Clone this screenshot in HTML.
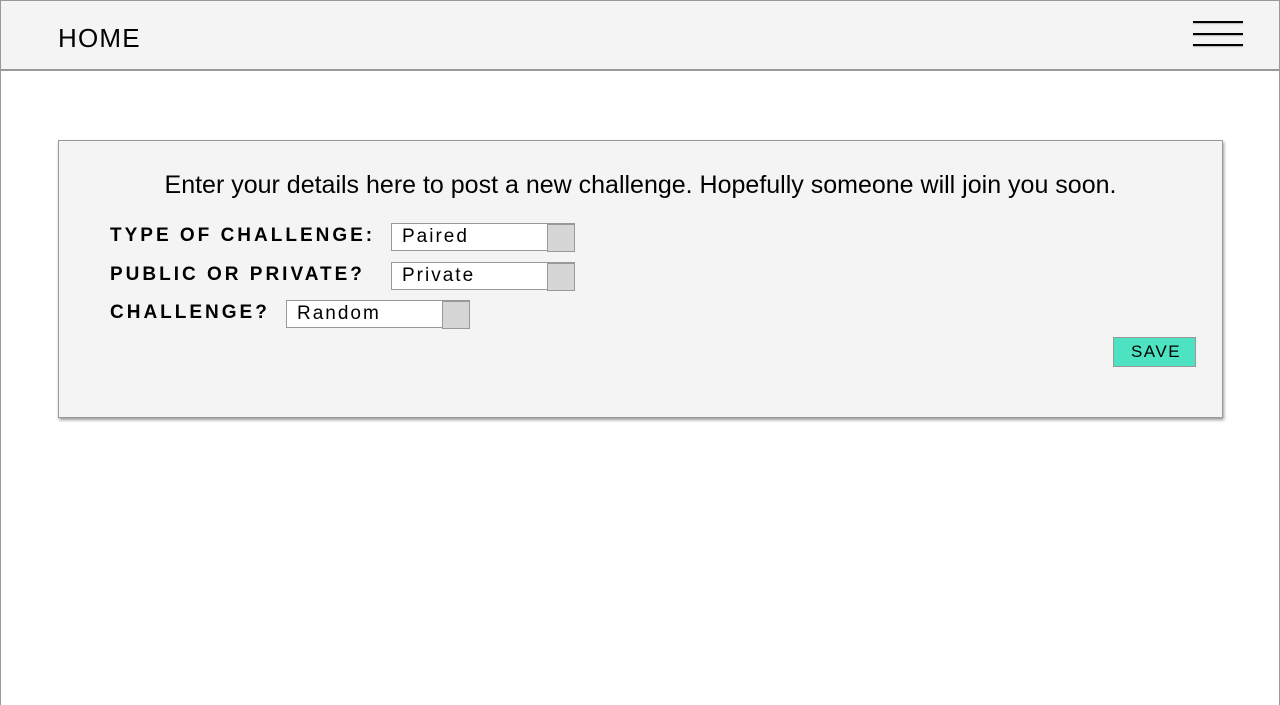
<!DOCTYPE html>
<html><head><style>
*{box-sizing:border-box;margin:0;padding:0}
body{width:1280px;height:705px;overflow:hidden;background:#fff;font-family:"Liberation Sans",Arial,sans-serif;position:relative}
.page{position:absolute;left:0;top:0;width:1280px;height:705px;border:1px solid #999;border-bottom:none}
.hdr{position:absolute;left:0;top:0;width:1280px;height:71px;background:#f4f4f4;border:1px solid #999;border-bottom:2px solid #999}
.home{position:absolute;left:57px;top:22px;font-size:26px;letter-spacing:1.2px;color:#000}
.bar{position:absolute;left:1193px;width:50px;height:2px;background:#000;box-shadow:0 1px 1px rgba(0,0,0,.25)}
.card{position:absolute;left:58px;top:140px;width:1165px;height:278px;background:#f4f4f4;border:1px solid #999;box-shadow:1px 2px 3px rgba(0,0,0,.4)}
.intro{position:absolute;left:0;width:100%;top:30px;text-align:center;font-size:25px;color:#000}
.lbl{position:absolute;left:51px;font-size:19px;font-weight:bold;letter-spacing:3px;color:#000}
.sel{position:absolute;height:28px;background:#fff;border:1px solid #999;font-size:19px;letter-spacing:2px;padding-left:10px;line-height:26px}
.sel .b{position:absolute;right:-1px;top:0;width:28px;height:28px;background:#d6d6d6;border:1px solid #999}
.save{position:absolute;left:1054px;top:196px;width:83px;height:30px;background:#4de2c2;border:1px solid #999;font-size:17px;letter-spacing:1.5px;text-align:center;line-height:28px;padding-left:3px}
</style></head><body>
<div class="page"></div>
<div class="hdr">
<div class="home">HOME</div>
</div>
<div class="bar" style="top:21px"></div>
<div class="bar" style="top:33px"></div>
<div class="bar" style="top:44px"></div>
<div class="card">
<div class="intro">Enter your details here to post a new challenge. Hopefully someone will join you soon.</div>
<div class="lbl" style="top:84px">TYPE OF CHALLENGE:</div>
<div class="sel" style="left:332px;top:82px;width:184px">Paired<div class="b"></div></div>
<div class="lbl" style="top:123px">PUBLIC OR PRIVATE?</div>
<div class="sel" style="left:332px;top:121px;width:184px">Private<div class="b"></div></div>
<div class="lbl" style="top:161px">CHALLENGE?</div>
<div class="sel" style="left:227px;top:159px;width:184px">Random<div class="b"></div></div>
<div class="save">SAVE</div>
</div>
</body></html>
